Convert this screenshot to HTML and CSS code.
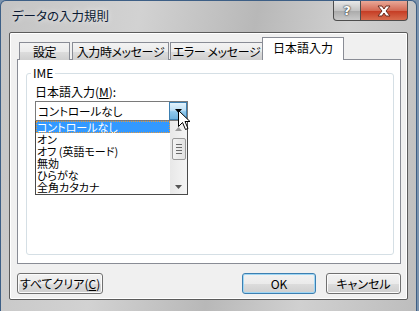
FILE: index.html
```
<!DOCTYPE html>
<html lang="ja">
<head>
    <meta charset="UTF-8">
    <title>データの入力規則</title>
    <link rel="stylesheet" href="styles.css">
</head>
<body>
    <div class="window">
        <div class="titlebar">
            <span class="title">データの入力規則</span>
            <div class="caption-buttons">
                <div class="cap-btn help">?</div>
                <div class="cap-btn close">
                    <svg width="16" height="12" viewBox="0 0 16 12">
                        <path d="M2 1 L6 1 L8 4 L10 1 L14 1 L10 6 L14 11 L10 11 L8 8 L6 11 L2 11 L6 6 Z" fill="#fff" stroke="#6b2a1e" stroke-width="1"/>
                    </svg>
                </div>
            </div>
        </div>

        <div class="client">
            <div class="tabs">
                <div class="tab t1">設定</div>
                <div class="tab t2">入力時メッセージ</div>
                <div class="tab t3">エラー メッセージ</div>
                <div class="tab active">日本語入力</div>
            </div>

            <div class="panel">
                <fieldset class="group">
                    <legend>IME</legend>
                    <div class="field-label">日本語入力(<u>M</u>):</div>
                    <div class="combo">
                        <div class="combo-box">
                            <span>コントロールなし</span>
                            <div class="drop-btn">
                                <svg width="7" height="4" viewBox="0 0 7 4"><path d="M0 0 H7 L3.5 4 Z" fill="#000"/></svg>
                            </div>
                        </div>
                        <div class="list">
                            <div class="items">
                                <div class="item selected">コントロールなし</div>
                                <div class="item">オン</div>
                                <div class="item">オフ (英語モード)</div>
                                <div class="item">無効</div>
                                <div class="item">ひらがな</div>
                                <div class="item">全角カタカナ</div>
                            </div>
                            <div class="scrollbar">
                                <svg class="arrow" width="7" height="4" viewBox="0 0 7 4"><path d="M0 4 H7 L3.5 0 Z" fill="#9a9a9a"/></svg>
                                <div class="thumb">
                                    <span></span><span></span><span></span><span></span>
                                </div>
                                <svg class="arrow down" width="7" height="4" viewBox="0 0 7 4"><path d="M0 0 H7 L3.5 4 Z" fill="#555"/></svg>
                            </div>
                        </div>
                        <svg class="cursor" width="13" height="21" viewBox="0 0 13 21">
                            <path d="M0.5 0.5 V16.5 L4.5 12.5 L7.5 19.5 L10 18.5 L7 11.5 H12 Z" fill="#fff" stroke="#000" stroke-width="1"/>
                        </svg>
                    </div>
                </fieldset>
            </div>

            <div class="buttons">
                <button class="btn clear">すべてクリア(<u>C</u>)</button>
                <div class="spacer"></div>
                <button class="btn ok">OK</button>
                <button class="btn cancel">キャンセル</button>
            </div>
        </div>
    </div>
</body>
</html>
```

FILE: styles.css
```
body {
    margin: 0;
    font-family: "Noto Sans CJK JP", "Liberation Sans", sans-serif;
    font-size: 12px;
    font-feature-settings: "palt";
    background: #7b93ad;
}

.window {
    width: 417px;
    height: 311px;
    border: 1px solid #3d5f86;
    border-bottom: none;
    border-radius: 6px 6px 0 0;
    background: linear-gradient(100deg, #c4c4c4 0%, #d2d2d2 30%, #b8b8b8 55%, #d0d0d0 75%, #bdbdbd 100%);
    box-sizing: border-box;
}

.titlebar {
    display: flex;
    align-items: flex-start;
    height: 31px;
}

.title {
    margin: 5px 0 0 11px;
    font-size: 12.5px;
    color: #0b1a33;
    text-shadow: 0 0 6px rgba(255, 255, 255, 0.9);
}

.caption-buttons {
    display: flex;
    margin-left: auto;
    margin-right: 8px;
}

.cap-btn {
    height: 19px;
    display: flex;
    justify-content: center;
    align-items: center;
    border: 1px solid #4d4d4d;
    border-top: none;
    box-sizing: content-box;
}

.help {
    width: 26px;
    border-radius: 0 0 0 4px;
    background: linear-gradient(#e8e8e8, #c4c4c4 50%, #a9a9a9 51%, #c9c9c9);
    color: #fff;
    font-family: "DejaVu Sans", sans-serif;
    font-weight: bold;
    font-size: 13px;
    text-shadow: 0 0 2px #333, 0 0 1px #000;
}

.close {
    width: 46px;
    border-left: none;
    border-radius: 0 0 4px 0;
    background: linear-gradient(#e9a898, #d46a55 50%, #c43a22 51%, #d86c4e);
}

.client {
    margin: 0 8px 0 8px;
    height: 268px;
    border: 1px solid #5b5b5b;
    border-radius: 2px;
    background: #f0f0f0;
    box-shadow: inset 0 0 0 1px #fff;
    box-sizing: border-box;
}

.tabs {
    display: flex;
    align-items: flex-end;
    padding: 4px 0 0 9px;
    height: 27px;
    box-sizing: border-box;
    position: relative;
    z-index: 1;
}

.tab {
    height: 18px;
    border: 1px solid #898c95;
    border-bottom: none;
    background: linear-gradient(#f3f3f3, #ebebeb 50%, #dddddd 51%, #cfcfcf);
    line-height: 18px;
    text-align: center;
    white-space: nowrap;
    letter-spacing: -0.4px;
    box-sizing: border-box;
    color: #000;
}

.t1 { width: 51px; margin-right: 2px; }
.t2 { width: 97px; margin-right: 1px; }
.t3 { width: 93px; }

.tab.active {
    width: 82px;
    height: 23px;
    margin-left: -1px;
    line-height: 20px;
    letter-spacing: 0;
    background: #fff;
}

.panel {
    margin: -1px 6px 0 7px;
    height: 205px;
    border: 1px solid #898c95;
    background: #fff;
    box-sizing: border-box;
    padding: 6px 6px 0 8px;
}

.group {
    margin: 0;
    height: 189px;
    padding: 0 8px;
    border: 1px solid #d5dfe5;
    border-radius: 3px;
    box-sizing: border-box;
}

.group legend {
    padding: 0 2px;
    margin-left: -4px;
    line-height: 14px;
}

.field-label {
    margin-top: 5px;
    line-height: 14px;
}

.combo {
    position: relative;
    width: 153px;
    margin-top: 2px;
}

.combo-box {
    display: flex;
    align-items: center;
    height: 20px;
    border: 1px solid #7a7a7a;
    box-sizing: border-box;
    padding-left: 2px;
    background: #fff;
}

.combo-box span {
    flex: 1;
    line-height: 16px;
    font-size: 11.5px;
}

.drop-btn {
    width: 18px;
    height: 18px;
    display: flex;
    justify-content: center;
    align-items: center;
    border: 1px solid #3c7fb1;
    box-sizing: border-box;
    background: linear-gradient(#e3f2fb, #bfe0f6 45%, #8fc8ec 55%, #6fb2df);
}

.list {
    position: absolute;
    top: 20px;
    left: 0;
    width: 153px;
    height: 74px;
    display: flex;
    border: 1px solid #4a4a4a;
    border-top: none;
    background: #fff;
    box-sizing: border-box;
    overflow: hidden;
}

.items {
    flex: 1;
    font-size: 11px;
}

.item {
    height: 12px;
    line-height: 12px;
    padding-left: 1px;
    white-space: nowrap;
}

.item.selected {
    background: #3399ff;
    color: #fff;
    outline: 1px dotted #e79a3c;
    outline-offset: -1px;
}

.scrollbar {
    width: 17px;
    display: flex;
    flex-direction: column;
    align-items: center;
    background: linear-gradient(90deg, #e8e8e8, #f4f4f4);
}

.scrollbar .arrow {
    margin-top: 6px;
}

.scrollbar .arrow.down {
    margin-top: auto;
    margin-bottom: 5px;
}

.thumb {
    width: 14px;
    height: 22px;
    margin-top: 7px;
    border: 1px solid #9a9a9a;
    border-radius: 2px;
    box-sizing: border-box;
    background: linear-gradient(90deg, #f3f3f3, #e2e2e2);
    display: flex;
    flex-direction: column;
    justify-content: center;
    align-items: center;
    gap: 2px;
}

.thumb span {
    width: 6px;
    height: 1px;
    background: #6b6b6b;
}

.cursor {
    position: absolute;
    left: 143px;
    top: 9px;
}

.buttons {
    display: flex;
    padding: 9px 6px 0 7px;
}

.spacer {
    flex: 1;
}

.btn {
    height: 21px;
    padding: 0;
    font-family: inherit;
    font-size: 12px;
    font-feature-settings: "palt";
    color: #000;
    border: 1px solid #707070;
    border-radius: 3px;
    background: linear-gradient(#f2f2f2, #ebebeb 50%, #dddddd 51%, #cfcfcf);
    box-shadow: inset 0 0 0 1px #fbfbfb;
}

.clear { width: 86px; }
.ok {
    width: 74px;
    border-color: #3c7fb1;
    box-shadow: inset 0 0 0 1px #9fd6f4;
}
.cancel {
    width: 75px;
    margin-left: 10px;
}
```
